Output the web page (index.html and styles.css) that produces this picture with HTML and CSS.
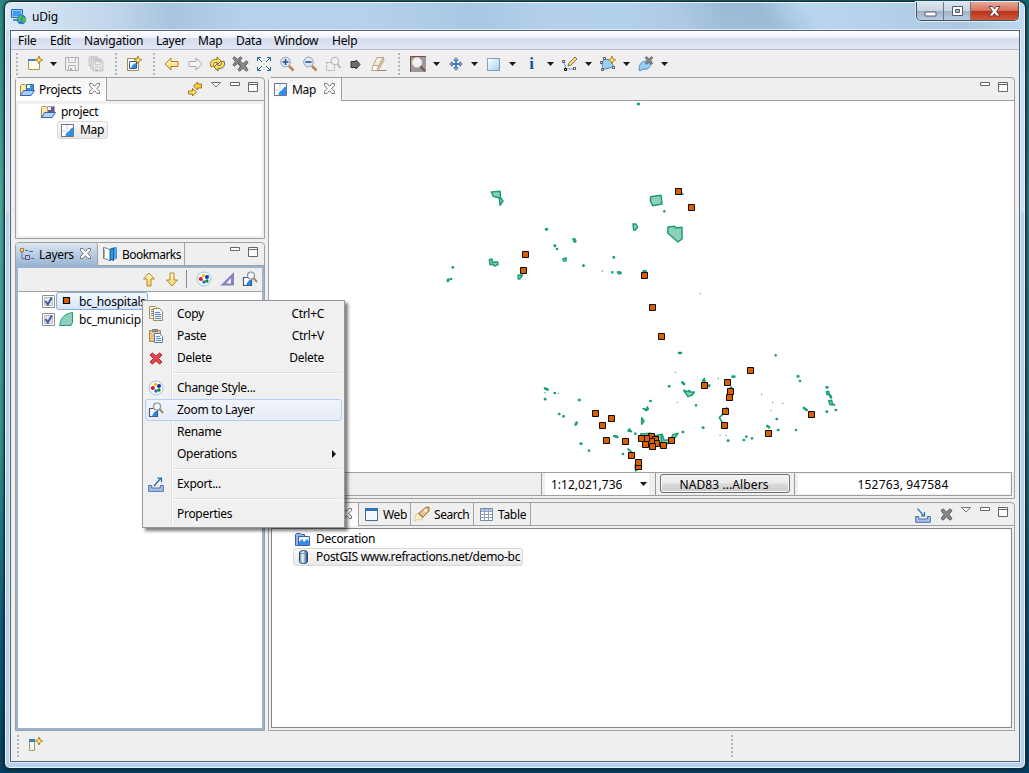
FILE: index.html
```html
<!DOCTYPE html>
<html lang="en">
<head>
<meta charset="utf-8">
<title>uDig</title>
<link rel="stylesheet" href="styles.css">
</head>
<body>
<svg class="defs" width="0" height="0">
  <defs>
    <linearGradient id="gold" x1="0" y1="0" x2="0" y2="1"><stop offset="0" stop-color="#fffbe0"/><stop offset="1" stop-color="#f3cf63"/></linearGradient>
    <linearGradient id="sky" x1="0" y1="0" x2="1" y2="1"><stop offset="0" stop-color="#fff"/><stop offset="1" stop-color="#9fd0f4"/></linearGradient>
    <linearGradient id="can" x1="0" y1="0" x2="1" y2="0"><stop offset="0" stop-color="#4b8fae"/><stop offset=".4" stop-color="#f4ffff"/><stop offset="1" stop-color="#1c3f74"/></linearGradient>
    <symbol id="spark" viewBox="0 0 7 7"><path d="M3.5 0l1 2.500 2.500 1-2.500 1-1 2.500-1-2.500-2.500-1 2.500-1z" fill="#fff3a8" stroke="#b38612" stroke-width=".9"/></symbol>
    <symbol id="folder" viewBox="0 0 16 16"><path d="M1.500 13.500v-10l1-1h3l1 1h3v9z" fill="#fdeaa5" stroke="#a98a45"/><path d="M7.500 2.500h7v7h-7z" fill="#2d92e8" stroke="#4266a2"/><path d="M8 3h3v3h-3z" fill="#fff"/><path d="M1.500 13.500l3-5h11l-3.500 5z" fill="#a9cdf7" stroke="#3a62b0"/></symbol>
    <symbol id="folder-open" viewBox="0 0 16 16"><path d="M1.500 13.500v-10l1-1h3l1 1h3v9z" fill="#fdeaa5" stroke="#a98a45"/><path d="M7.500 2.500h7v7h-7z" fill="#66588f" stroke="#a89bbd"/><path d="M8 3h3v3h-3z" fill="#eee"/><path d="M1.500 13.500l3-5h11l-3.500 5z" fill="#b5d5f7" stroke="#3a62b0"/></symbol>
    <symbol id="map" viewBox="0 0 14 14"><path d="M.5.5h13v13h-13z" fill="#fdfdff" stroke="#5d6478"/><path d="M13 4c-3 0-3 3-5 4-2 1-3 2-3 5h8z" fill="#2e91e9"/><path d="M6.500 1v5M1 7.500h5" stroke="#c5c9e3"/></symbol>
    <symbol id="close" viewBox="0 0 11 11"><path d="M.5.5h2.500l2.500 2.800L8 .5h2.500v2L7.800 5.500l2.700 3v2H8L5.500 7.700 3 10.500H.5v-2l2.700-3-2.700-3z" fill="#fff" stroke="#666" stroke-width=".9"/></symbol>
    <symbol id="min" viewBox="0 0 11 4"><path d="M.5.5h9v3h-9z" fill="#fff" stroke="#666"/></symbol>
    <symbol id="max" viewBox="0 0 11 11"><path d="M.5.5h9v9h-9zM.5 2.500h9" fill="#fff" stroke="#666"/></symbol>
    <symbol id="tri" viewBox="0 0 11 6"><path d="M.5.5h9L5 5z" fill="#fff" stroke="#777"/></symbol>
    <symbol id="drop" viewBox="0 0 7 4"><path d="M0 0h7L3.500 4z" fill="#1a1a1a"/></symbol>
    <symbol id="greyx" viewBox="0 0 13 13"><path d="M1 2.500L3 .8l3.500 3.200L10 .8l2 1.700-3 4 3 4-2 1.700L6.500 9 3 12.200l-2-1.700 3-4z" fill="#888" stroke="#5c5c5c"/></symbol>
    <symbol id="palette" viewBox="0 0 16 16"><circle cx="8" cy="8" r="7" fill="#eef8ff" stroke="#9fc3df"/><circle cx="8" cy="8" r="5.600" fill="#fff"/><circle cx="7.500" cy="4.500" r="1.700" fill="#f2c400"/><circle cx="11" cy="6" r="2" fill="#1231b5"/><circle cx="4.800" cy="8" r="2" fill="#e01515"/><circle cx="8" cy="11" r="1.800" fill="#1f74e0"/><circle cx="11" cy="10" r="1.700" fill="#108a28"/></symbol>
    <symbol id="zoomlayer" viewBox="0 0 16 16"><path d="M1.500 6.500h8v8h-8z" fill="#fff" stroke="#4b5880" stroke-width="1.200"/><path d="M9 9c-3 0-3 2-5 5h5z" fill="#2586e8"/><circle cx="9" cy="4.500" r="3.500" fill="#f3f6fa" stroke="#8794a3" stroke-width="1.200"/><path d="M11.500 7l3.500 4" stroke="#a38a5d" stroke-width="2"/></symbol>
    <symbol id="sync" viewBox="0 0 16 16"><path d="M6.500 5l4-4v2h4v4h-4v2z" fill="#f9cf49" stroke="#a87410"/><path d="M9.500 11l-4 4v-2h-4v-3h4V7.500z" fill="#ffe27a" stroke="#a87410"/></symbol>
    <symbol id="hosp" viewBox="0 0 8 8"><path d="M1.500 1.500h6v6h-6z" fill="#d95f02" stroke="#100800"/></symbol>
    <symbol id="arrow" viewBox="0 0 16 14"><path d="M1 7l6-6v3.500h7v5H7V13z" stroke-linejoin="round"/></symbol>
    <symbol id="lens" viewBox="0 0 16 16"><path d="M10 10l4.500 4.500" stroke="#b9854b" stroke-width="2.500"/><circle cx="6.500" cy="6" r="4.800" fill="#dfeaf7" stroke="#8fa0b5"/></symbol>
    <symbol id="disk" viewBox="0 0 16 16"><path d="M1.500 1.500h13v13h-13z" fill="#efefef" stroke="#b0b0b0"/><path d="M4.500 1.500h7v5h-7zM4.500 14.500v-5h7v5" fill="none" stroke="#b8b8b8"/><path d="M6 12h2v3H6z" fill="#b0b0b0"/></symbol>
    <symbol id="tray" viewBox="0 0 16 15"><path d="M.7 8.500h3v2.500h8.600V8.500h3v5.800H.7z" fill="#a9c3e8" stroke="#4a6ca8"/></symbol>
  </defs>
</svg>

<div class="window">
  <header class="titlebar">
    <svg class="app-icon" viewBox="0 0 16 16"><path d="M.5 .5h11v8H.5z" fill="#8fc6f5" stroke="#2c6aab"/><path d="M2 2h8v5H2z" fill="#3c9bea"/><path d="M2 10h5v2H2z" fill="#5590c8"/><circle cx="10.500" cy="10.500" r="4.800" fill="#3079cf"/><path d="M6.500 9l3-3 2 2-2 2 1 2-2 1zM12 8l3 1v3l-2 2-2-2z" fill="#4ec04b"/></svg>
    <span class="title">uDig</span>
    <div class="caption">
      <span class="cap cap-min"><svg width="13" height="6"><path d="M1 1h11v4H1z" fill="#fff" stroke="#555a69"/></svg></span>
      <span class="cap cap-max"><svg width="13" height="11"><path d="M1.500 .5h10v9h-10z" fill="#fff" stroke="#555a69"/><path d="M4.500 3.500h4v3h-4z" fill="#a9bccf" stroke="#555a69"/></svg></span>
      <span class="cap cap-close"><svg width="13" height="11"><path d="M1 .5h3.500l2 2.500 2-2.500H12L8.500 5.500l3.500 4.500H8.500l-2-2.500-2 2.500H1l3.500-4.500z" fill="#fff" stroke="#5d4048"/></svg></span>
    </div>
  </header>

  <div class="client">
    <nav class="menubar"><span>File</span><span>Edit</span><span>Navigation</span><span>Layer</span><span>Map</span><span>Data</span><span>Window</span><span>Help</span></nav>

    <div class="toolbar">
      <i class="grip g1"></i>
      <span class="tb w24"><svg width="16" height="16"><path d="M1.500 3.500h11v10h-11z" fill="#fffdf0" stroke="#b39352"/><path d="M1 3h9v2H1z" fill="#3d86cc"/><use href="#spark" x="8" y="0" width="8" height="8"/></svg></span>
      <span class="tb w13"><svg width="7" height="4"><use href="#drop"/></svg></span>
      <span class="tb w24"><svg width="16" height="16"><use href="#disk"/></svg></span>
      <span class="tb saveall"><svg width="16" height="16"><use href="#disk" width="11" height="11"/><use href="#disk" x="2" y="2" width="12" height="12"/><use href="#disk" x="4" y="4" width="12" height="12"/></svg></span>
      <i class="grip g2"></i>
      <span class="tb w29"><svg width="16" height="16"><path d="M1.500 2.500h11v12h-11z" fill="#fff" stroke="#a58b54"/><path d="M3.500 5.500h7v7h-7z" fill="#fff" stroke="#34588f"/><path d="M10 7c-3 1-4 2-5 5h5z" fill="#2e91e9"/><use href="#spark" x="8" y="0" width="8" height="8"/></svg></span>
      <i class="grip g3"></i>
      <span class="tb"><svg width="16" height="14" fill="url(#gold)" stroke="#b8821b"><use href="#arrow"/></svg></span>
      <span class="tb"><svg width="16" height="14" fill="#f4f4f4" stroke="#a9a9a9"><g transform="matrix(-1 0 0 1 16 0)"><use href="#arrow" width="16" height="14"/></g></svg></span>
      <span class="tb"><svg width="17" height="16"><path d="M2 11C0 6 3 3 8 3.500V1l4 4-4 4V6.500C5 6 4 8 5 10z" fill="#f7dc55" stroke="#8b6c18" stroke-width=".9"/><path d="M15 5c2 5-1 8-6 7.500V15l-4-4 4-4v2.500c3 .5 4-1.500 3-3.500z" fill="#f7dc55" stroke="#6a5b2a" stroke-width=".9"/></svg></span>
      <span class="tb"><svg width="17" height="16"><use href="#greyx" x="0" y="0" width="11" height="11"/><use href="#greyx" x="5" y="4" width="12" height="12"/></svg></span>
      <span class="tb"><svg width="16" height="16" fill="none" stroke="#1b67a5"><path d="M1.500 5V1.500H5M11 1.500h3.500V5M1.500 11v3.500H5M11 14.500h3.500V11M2 2l4 4M14 2l-4 4M2 14l4-4M14 14l-4-4"/></svg></span>
      <span class="tb"><svg width="16" height="16"><use href="#lens"/><path d="M3.500 6h6M6.500 3v6" stroke="#1e4f94" stroke-width="1.600"/></svg></span>
      <span class="tb"><svg width="16" height="16"><use href="#lens"/><path d="M3.500 6h6" stroke="#1e4f94" stroke-width="1.600"/></svg></span>
      <span class="tb"><svg width="16" height="16"><path d="M1.500 6.500h8v8h-8z" fill="none" stroke="#aaa" stroke-dasharray="2 1"/><circle cx="10" cy="5" r="3.800" fill="#f1f1f1" stroke="#b2b2b2"/><path d="M12.500 8l3 4" stroke="#b2b2b2" stroke-width="1.600"/></svg></span>
      <span class="tb"><svg width="11" height="11"><path d="M1 2.500h5V1L10 5.500 6 10V8.500H1z" fill="#6b7078" stroke="#2f3238"/></svg></span>
      <span class="tb"><svg width="16" height="16"><path d="M6 1.500h6.500l-4.500 8H2z" fill="#f6ecda" stroke="#b5a487"/><path d="M2 9.500h6l-2 5H.7z" fill="#fff" stroke="#b5a487"/><path d="M12.500 1.500L8 9.500l-2 5 3-3 4-7z" fill="#d8c6a5" stroke="#b5a487" stroke-width=".7"/><path d="M6 14.500h9.500" stroke="#a5895c"/></svg></span>
      <i class="grip g4"></i>
      <span class="tb tool"><svg width="16" height="16"><path d="M0 0h16v16H0z" fill="#9a9a9a"/><path d="M.5 16V.5H16" fill="none" stroke="#814d42"/><path d="M10 10l5 5" stroke="#7d5149" stroke-width="2"/><circle cx="7" cy="6.500" r="4.800" fill="#f1f1f1" stroke="#ddd"/></svg></span>
      <span class="tb dd"><svg width="7" height="4"><use href="#drop"/></svg></span>
      <span class="tb tool"><svg width="14" height="14" fill="none" stroke="#2967aa"><path d="M7 2v10M2 7h10" stroke-width="1.600"/><path d="M4.800 3.200L7 .8l2.200 2.400zM4.800 10.800L7 13.200l2.200-2.400zM3.200 4.800L.8 7l2.400 2.200zM10.800 4.800L13.200 7l-2.400 2.200z" fill="#dcebfb"/></svg></span>
      <span class="tb dd"><svg width="7" height="4"><use href="#drop"/></svg></span>
      <span class="tb tool"><svg width="13" height="13"><path d="M.5.5h12v12H.5z" fill="url(#sky)" stroke="#244f7c" stroke-dasharray="1 1"/></svg></span>
      <span class="tb dd"><svg width="7" height="4"><use href="#drop"/></svg></span>
      <span class="tb tool info">i</span>
      <span class="tb dd"><svg width="7" height="4"><use href="#drop"/></svg></span>
      <span class="tb tool"><svg width="16" height="16"><path d="M2 6l2 7h9" fill="none" stroke="#4a9bdd"/><path d="M.5 4.500h2v2h-2zM11.500 11.500h2v2h-2z" fill="#fff" stroke="#555"/><path d="M2.500 12.500h2v2h-2z" fill="#fe0" stroke="#000"/><path d="M6 10l1-3 6-6 2 2-6 6z" fill="#f2d79a" stroke="#91703c"/></svg></span>
      <span class="tb dd"><svg width="7" height="4"><use href="#drop"/></svg></span>
      <span class="tb tool"><svg width="16" height="16"><path d="M4 3l7 1 2.500 7L3 13.500 2 8z" fill="#9ccdf2" stroke="#4d95cf"/><path d="M3.500 1.500h2v2h-2zM.5 5.500h2v2h-2zM12.500 10.500h2v2h-2zM1.500 12.500h2v2h-2z" fill="#fff" stroke="#555"/><use href="#spark" x="8" y="0" width="8" height="8"/></svg></span>
      <span class="tb dd"><svg width="7" height="4"><use href="#drop"/></svg></span>
      <span class="tb tool"><svg width="16" height="16"><path d="M1 14c0-6 3-9 7-9l5 3c-1 4-4 6-8 5l-3 2z" fill="#9ccdf2" stroke="#4294d6"/><use href="#greyx" x="6" y="0" width="10" height="9"/></svg></span>
      <span class="tb dd"><svg width="7" height="4"><use href="#drop"/></svg></span>
    </div>

    <main class="workbench">
      <div class="col-left">
        <section class="pane projects">
          <div class="tabs">
            <div class="tab sel t-projects"><svg width="16" height="16"><use href="#folder"/></svg><span>Projects</span><svg class="x" width="11" height="11"><use href="#close"/></svg></div>
            <div class="acts"><svg width="16" height="16"><use href="#sync"/></svg><svg class="a-tri" width="11" height="6"><use href="#tri"/></svg><svg class="a-min" width="11" height="4"><use href="#min"/></svg><svg class="a-max" width="11" height="11"><use href="#max"/></svg></div>
          </div>
          <div class="inner">
            <div class="row r-project"><svg width="16" height="16"><use href="#folder-open"/></svg><span>project</span></div>
            <div class="row r-map"><svg width="13" height="13"><use href="#map"/></svg><span>Map</span></div>
          </div>
        </section>

        <section class="pane layers">
          <div class="tabs">
            <div class="tab active t-layers"><svg width="16" height="16"><path d="M3 5v6.500h3M6 3.500h3" fill="none" stroke="#55779c"/><path d="M1.500 1.500h3v3h-3z" fill="#ffd68a" stroke="#b27a1e"/><path d="M6.500 8.500h4v4h-4z" fill="#c9c0de" stroke="#5a4e82"/><path d="M10 4.500h4M12 11.500h3" stroke="#2b76ac"/></svg><span>Layers</span><svg class="x" width="11" height="11"><use href="#close"/></svg></div>
            <div class="tab t-book"><svg width="16" height="16"><path d="M1.500 1.500l4 1 2 1 2-1 5-1v11l-5 1-2 1-2-1-4-1z" fill="#fff" stroke="#5a82a3"/><path d="M2.500 3.500v8" stroke="#c9a650"/><path d="M8 3.500l3.500-1.500v13L10 13l-2 2z" fill="#3394df" stroke="#145c9b"/><path d="M12 1h2.500v11H12z" fill="#4ca5e8"/></svg><span>Bookmarks</span></div>
            <div class="acts"><svg class="a-min" width="11" height="4"><use href="#min"/></svg><svg class="a-max" width="11" height="11"><use href="#max"/></svg></div>
          </div>
          <div class="layer-box">
            <div class="layer-tools">
              <svg class="up" width="14" height="15"><path d="M7 1l5.500 6H9v7H5V7H1.500z" fill="url(#gold)" stroke="#b8851f"/></svg>
              <svg width="14" height="15"><path d="M7 14L1.500 8H5V1h4v7h3.500z" fill="url(#gold)" stroke="#b8851f"/></svg>
              <i></i>
              <svg width="16" height="16"><use href="#palette"/></svg>
              <svg width="16" height="16"><path d="M1 15L15 1v14z" fill="#8583be"/><path d="M7 12.500l5-5.500v5.500z" fill="#f5f5fb"/><path d="M1 14.500h14" stroke="#b9b6da"/></svg>
              <svg width="16" height="16"><use href="#zoomlayer"/></svg>
            </div>
            <div class="layer-tree">
              <div class="layer"><svg class="check" width="13" height="13"><path d="M.5.5h12v12H.5z" fill="#fff" stroke="#8e8f8f"/><path d="M2.500 2.500h8v8h-8z" fill="#e3e5e8" stroke="#b5bcc4"/><path d="M3.500 6l2.300 3.500L9.800 2.500" fill="none" stroke="#3f579b" stroke-width="1.900"/></svg><span class="lname hot"><svg width="16" height="16"><path d="M4.500 4.500h6v6h-6z" fill="#d95f02" stroke="#000" stroke-width="1.200"/></svg>bc_hospitals</span></div>
              <div class="layer"><svg class="check" width="13" height="13"><path d="M.5.5h12v12H.5z" fill="#fff" stroke="#8e8f8f"/><path d="M2.500 2.500h8v8h-8z" fill="#e3e5e8" stroke="#b5bcc4"/><path d="M3.500 6l2.300 3.500L9.800 2.500" fill="none" stroke="#3f579b" stroke-width="1.900"/></svg><span class="lname"><svg width="16" height="16"><path d="M.5 14.500C2 7 5 3 13.500 1.500v10l-1.500 3z" fill="#8ecfba" stroke="#1b9e77"/></svg>bc_municip</span></div>
            </div>
          </div>
        </section>
      </div>

      <div class="col-right">
        <section class="pane mappane">
          <div class="tabs">
            <div class="tab sel t-map"><svg width="13" height="13"><use href="#map"/></svg><span>Map</span><svg class="x" width="11" height="11"><use href="#close"/></svg></div>
            <div class="acts"><svg class="a-min" width="11" height="4"><use href="#min"/></svg><svg class="a-max" width="11" height="11"><use href="#max"/></svg></div>
          </div>
          <svg class="canvas" viewBox="269 101 745 371">
            <g transform="translate(430 95) scale(.33333)" fill="#8ecfba" stroke="#1b9e77" stroke-width="4.500" stroke-linejoin="round" stroke-linecap="round">
              <path d="M184 291l26-2 2 20 7 9-9 13-2-22-18-5zM662 305l31-4 3 26-28 5-7-15zM714 396l20-2 3 5 19-2 0 35-12 9-31-27zM609 387h9l5 9-7 9h-5zM178 494l8-2 2 10 15-1 1 8-10 4-6-5-8 1zM264 541l14-1-9 12h-4zM429 431l6 1 3 8-5 2zM399 491l10-2-1 8-8 1zM562 531l8-1 4 4-7 3z"/>
              <path d="M624 27h3M348 403h3M374 451l1 2M381 462h0M68 517h1M54 558l1-4M63 552h0M460 512h1M551 487h1M547 532h0M703 349h0M756 297h1M641 529h6" stroke-width="8"/>
              <path d="M517 528h0M811 595h0" stroke-width="4"/>
            </g>
            <g transform="translate(530 330) scale(.33333)" fill="#8ecfba" stroke="#1b9e77" stroke-width="4.500" stroke-linejoin="round" stroke-linecap="round">
              <path d="M461 181l14 4 2-4 7 6 9-1-6 9-13 5zM339 236l10 2 3-8 3 8-6 4zM335 263l7 10-7 10zM294 303l4-6 7 8zM889 185l7-1 2 8-7 2zM896 212l9-1 2 10 7 4-14-1zM517 153l6-8 2 9zM533 166l7-1-2 5zM332 312l30-2 8 8 27-5 5 18 20-2 6-14 16-5-14 20-24 15-24-10-35 6-10-12zM378 320l7 18M394 318l1 18M315 405l20 4-18 14z"/>
              <path d="M590 233l-6 14-16 16 11 18M294 357l16 14" fill="none" stroke-width="5"/>
              <path d="M447 69h6M45 175l8 4M45 207l1 1M74 189h1M147 210h2M87 252h1M100 259h1M137 284l3-6M253 318l9 3M316 311h0M152 341h2M177 362h0M279 372h0M361 213h1M457 157l5 5M417 169h1M498 226h0M608 140h5M603 173l2 4M737 76h0M803 139h2M810 153h0M890 172h2M900 196l3 6M822 234l8 6M890 245h1M917 240h1M740 267h1M712 288l5 4M744 300h1M798 300h0M594 332h1M641 330h1M649 320h0M666 325h0M519 293h1M458 306h1" stroke-width="8"/>
              <path d="M45 188h0M85 190h0M436 127h0M442 217h0M565 146h0M570 316h0M588 316h0M695 193h0M728 217h0M759 220h0M723 241h0" stroke-width="4"/>
            </g>
            <g class="hospitals">
              <use href="#hosp" x="674" y="187" width="8" height="8"/><use href="#hosp" x="687" y="203" width="8" height="8"/><use href="#hosp" x="521" y="250" width="8" height="8"/><use href="#hosp" x="519" y="266" width="8" height="8"/><use href="#hosp" x="640" y="271" width="8" height="8"/><use href="#hosp" x="648" y="303" width="8" height="8"/><use href="#hosp" x="657" y="332" width="8" height="8"/><use href="#hosp" x="746" y="366" width="8" height="8"/><use href="#hosp" x="723" y="378" width="8" height="8"/><use href="#hosp" x="700" y="381" width="8" height="8"/><use href="#hosp" x="726" y="387" width="8" height="8"/><use href="#hosp" x="725" y="393" width="8" height="8"/><use href="#hosp" x="721" y="407" width="8" height="8"/><use href="#hosp" x="720" y="421" width="8" height="8"/><use href="#hosp" x="807" y="410" width="8" height="8"/><use href="#hosp" x="764" y="429" width="8" height="8"/><use href="#hosp" x="591" y="409" width="8" height="8"/><use href="#hosp" x="607" y="414" width="8" height="8"/><use href="#hosp" x="598" y="421" width="8" height="8"/><use href="#hosp" x="602" y="436" width="8" height="8"/><use href="#hosp" x="621" y="437" width="8" height="8"/><use href="#hosp" x="667" y="436" width="8" height="8"/><use href="#hosp" x="641" y="440" width="8" height="8"/><use href="#hosp" x="647" y="432" width="8" height="8"/><use href="#hosp" x="651" y="435" width="8" height="8"/><use href="#hosp" x="652" y="439" width="8" height="8"/><use href="#hosp" x="659" y="441" width="8" height="8"/><use href="#hosp" x="647" y="437" width="8" height="8"/><use href="#hosp" x="648" y="442" width="8" height="8"/><use href="#hosp" x="642" y="434" width="8" height="8"/><use href="#hosp" x="637" y="434" width="8" height="8"/><use href="#hosp" x="627" y="451" width="8" height="8"/><use href="#hosp" x="634" y="462" width="8" height="8"/><use href="#hosp" x="634" y="458" width="8" height="8"/>
            </g>
          </svg>
          <div class="status">
            <div class="scale"><span>1:12,021,736</span><svg width="7" height="4"><use href="#drop"/></svg></div>
            <div class="crs"><button class="crs-btn">NAD83 ...Albers</button></div>
            <div class="coords">152763, 947584</div>
          </div>
        </section>

        <section class="pane catalog">
          <div class="tabs">
            <div class="tab sel t-cat"><svg class="x" width="11" height="11"><use href="#close"/></svg></div>
            <div class="tab t-web"><svg width="13" height="13"><path d="M.5.5h12v12H.5z" fill="#f1f8ff" stroke="#466b96"/><path d="M0 0h13v3H0z" fill="#2f74b9"/></svg><span>Web</span></div>
            <div class="tab t-search"><svg width="16" height="16"><path d="M.5 15l1.500-7 3-1 4 4-1 3-3-1z" fill="#fff3b5" stroke="#d9c27a" stroke-width=".7"/><path d="M4.500 7.500l7-6 3.500-.5v4L8.500 11.500z" fill="#edc48c" stroke="#9a6a3a"/><path d="M5 7.500l3.500 3.500" stroke="#8c8cae" stroke-width="1.500"/><circle cx="11.500" cy="4.500" r="1.200" fill="#fff"/></svg><span>Search</span></div>
            <div class="tab t-table"><svg width="13" height="13"><path d="M.5.5h12v12H.5z" fill="#fff" stroke="#7589a6"/><path d="M1 1h11v2H1z" fill="#b7c9e2"/><path d="M1 3.500h11M1 6.500h11M1 9.500h11M4.500 1v11M8.500 1v11" stroke="#8fa3c0"/></svg><span>Table</span></div>
            <div class="acts"><svg class="a-import" width="16" height="15"><use href="#tray"/><path d="M2.500 .5l6 7M9.500 4v4H6" fill="none" stroke="#2575ad" stroke-width="1.200"/></svg><svg class="a-del" width="13" height="13"><use href="#greyx"/></svg><svg class="a-tri" width="11" height="6"><use href="#tri"/></svg><svg class="a-min" width="11" height="4"><use href="#min"/></svg><svg class="a-max" width="11" height="11"><use href="#max"/></svg></div>
          </div>
          <div class="inner-line">
            <div class="row r-deco"><svg width="15" height="15"><path d="M.5 2.500l1-1h4l1 1h3v11h-9z" fill="#8fb6ea" stroke="#3a5fae"/><path d="M3.500 4.500h11v9h-11z" fill="#eef6ff" stroke="#3a5fae"/><path d="M4 10l3-3 2 3 3-3 2 2v4H4z" fill="#3b8be6"/></svg><span>Decoration</span></div>
            <div class="row r-post"><svg width="11" height="14"><path d="M1.500 2.500c0-2.500 8-2.500 8 0v9c0 2.500-8 2.500-8 0z" fill="url(#can)" stroke="#26425a"/><path d="M2 2.500c1 1.500 6 1.500 7 0" fill="none" stroke="#5e97a8"/></svg><span>PostGIS www.refractions.net/demo-bc</span></div>
          </div>
        </section>
      </div>
    </main>

    <footer class="trim"><i class="grip"></i><svg width="15" height="15"><path d="M1.500 3.500h5v10h-5z" fill="#eef8fb" stroke="#aa9a68"/><path d="M1 2h6v3H1z" fill="#3e80bd"/><use href="#spark" x="7" y="0" width="8" height="8"/></svg><i class="grip grip2"></i></footer>
  </div>
</div>

<div class="ctx">
  <div class="mi"><svg width="16" height="16"><path d="M1.500.5h6l2 2v10h-8z" fill="#fff8e0" stroke="#b39350"/><path d="M5.500 2.500h6l3 3v9h-9z" fill="#f2f7ff" stroke="#a08a55"/><path d="M3 3.500h2M3 5.500h2M3 7.500h2M3 9.500h2M7 6.500h5M7 8.500h6M7 10.500h6M7 12.500h6" stroke="#5a80bd"/></svg><span>Copy</span><b>Ctrl+C</b></div>
  <div class="mi"><svg width="16" height="16"><path d="M1.500 2.500h11v11h-11z" fill="#e5c48c" stroke="#b08a50"/><path d="M4.500 1.500h5v2h-5z" fill="#9aa4b6" stroke="#778"/><path d="M6.500 5.500h5l3 3v6h-8z" fill="#f5f9ff" stroke="#5c7fb3"/><path d="M8 8.500h4M8 10.500h5M8 12.500h5" stroke="#6a92c8"/></svg><span>Paste</span><b>Ctrl+V</b></div>
  <div class="mi"><svg width="14" height="13"><path d="M1 3L3.500 1 7 4.200 10.500 1 13 3 9.500 6.500 13 10l-2.500 2L7 8.800 3.500 12 1 10l3.500-3.500z" fill="#e74646" stroke="#b3202c"/></svg><span>Delete</span><b>Delete</b></div>
  <hr>
  <div class="mi"><svg width="16" height="16"><use href="#palette"/></svg><span>Change Style...</span></div>
  <div class="mi on"><svg width="16" height="16"><use href="#zoomlayer"/></svg><span>Zoom to Layer</span></div>
  <div class="mi"><i></i><span>Rename</span></div>
  <div class="mi"><i></i><span>Operations</span><svg class="sub" width="4" height="8"><path d="M0 0l4 4-4 4z" fill="#111"/></svg></div>
  <hr>
  <div class="mi"><svg width="16" height="15"><use href="#tray"/><path d="M6 9l7-8M9 1h4.500v4" fill="none" stroke="#256a9d" stroke-width="1.200"/></svg><span>Export...</span></div>
  <hr>
  <div class="mi"><i></i><span>Properties</span></div>
</div>
</body>
</html>
```
FILE: styles.css
```css
* { box-sizing: border-box; }
body {
  margin: 0;
  width: 1029px;
  height: 773px;
  overflow: hidden;
  padding: 1px 3px 4px 4px;
  font: 12px/18px "Noto Sans", "Open Sans", sans-serif;
  letter-spacing: -0.2px;
  color: #000;
  background: linear-gradient(90deg, rgba(0, 40, 70, 0) 60%, rgba(0, 60, 100, .45)), linear-gradient(180deg, #288680 0, #4ba59b 25%, #35938f 55%, #0d5d7d 80%, #053e5c 100%);
}
svg { display: block; flex: none; }
.defs { position: absolute; }
i { display: block; flex: none; }

.window {
  height: 768px;
  display: flex;
  flex-direction: column;
  border: 1px solid #20292f;
  border-radius: 7px 7px 6px 6px;
  padding: 0 5px 6px;
  box-shadow: inset 0 0 0 1px #e8f4fc, 0 0 3px #012;
  background: linear-gradient(180deg, #c4dcf0 0, #cbdff1 210px, #b7d2ee 211px, #b4d2ee 100%);
}
.titlebar {
  height: 27px;
  flex: none;
  margin: 1px -4px 0;
  display: flex;
  align-items: center;
  padding-left: 5px;
  border-radius: 5px 5px 0 0;
  background:
    linear-gradient(68deg, transparent 340px, rgba(150, 190, 225, .0) 0, rgba(140, 175, 210, .28) 440px, transparent 510px),
    linear-gradient(55deg, transparent 560px, rgba(130, 165, 195, .5) 630px, transparent 670px),
    linear-gradient(90deg, #dbe9f5 0, #bfd5ea 110px, #a9c4df 165px, #b6d1eb 240px, #b3d0ec 620px, #a8c4df 720px, #bad6ef 780px, #b7d3ec 860px, #abc8e0 960px, #c0daf0 100%);
}
.app-icon { width: 16px; height: 16px; }
.title { margin-left: 5px; letter-spacing: -0.2px; }
.caption {
  align-self: flex-start;
  height: 19px;
  display: flex;
  margin: -1px 5px 0 auto;
  border: 1px solid #48505c;
  border-top: 0;
  border-radius: 0 0 5px 5px;
  overflow: hidden;
  box-shadow: 0 0 0 1px #dcebf7;
}
.cap { display: flex; align-items: center; justify-content: center; background: linear-gradient(#dce7f1 0, #c6d3e0 50%, #9fb2c6 51%, #b9cde0 100%); border-right: 1px solid #6b7886; }
.cap-min { width: 27px; padding-top: 5px; }
.cap-max { width: 27px; }
.cap-close { width: 47px; border: 0; background: linear-gradient(#e9a898 0, #d6705a 48%, #b93418 52%, #cf5a38 100%); }

.client { flex: 1; min-height: 0; display: flex; flex-direction: column; border: 1px solid #58636f; background: #efefef; box-shadow: 0 0 0 1px #dcebf8; }
.menubar {
  height: 19px;
  flex: none;
  display: grid;
  grid-template-columns: 32px 34px 72px 42px 38px 38px 58px auto;
  padding-left: 7px;
  line-height: 20px;
  background: linear-gradient(#fff 0, #eef1f9 38%, #d5dcee 42%, #e2e7f5 100%);
  border-bottom: 1px solid #b6bccc;
}
.toolbar { height: 27px; flex: none; display: flex; align-items: center; padding-top: 1px; margin-left: -1px; }
.tb { width: 23px; display: flex; justify-content: center; flex: none; }
.w24 { width: 24px; }
.w13 { width: 13px; }
.w29 { width: 29px; }
.saveall { margin-right: 5px; }
.tool { width: 21px; }
.dd { width: 17px; padding-right: 1px; }
.info { font: bold 17px/20px "Liberation Serif", serif; color: #1455a0; }
.grip { height: 22px; background: repeating-linear-gradient(180deg, #b4b4b4 0 2px, transparent 2px 4px) center / 2px 100% no-repeat; }
.g1 { width: 13px; }
.g2 { width: 7px; }
.g3 { width: 12px; }
.g4 { width: 17px; }

.workbench { flex: 1; min-height: 0; display: flex; gap: 3px; padding: 0 4px; }
.col-left { width: 250px; display: flex; flex-direction: column; gap: 3px; }
.col-right { width: 747px; display: flex; flex-direction: column; gap: 3px; }
.pane { display: flex; flex-direction: column; border: 1px solid #a0a0a0; border-radius: 4px 4px 0 0; }
.projects { height: 162px; }
.layers { flex: 1; min-height: 0; }
.mappane { height: 422px; background: #efefef; }
.catalog { flex: 1; min-height: 0; }

.tabs { height: 23px; flex: none; display: flex; box-shadow: inset 0 -1px #a0a0a0; letter-spacing: -0.3px; }
.tab { height: 22px; display: flex; align-items: center; padding: 1px 4px 0 3px; border-right: 1px solid #a0a0a0; white-space: nowrap; }
.tab svg { margin-top: -1px; }
.tab span { margin-left: 4px; line-height: 20px; }
.tab .x { margin-left: auto; margin-top: -3px; }
.sel { height: 23px; background: linear-gradient(#f4f4f4, #fff); }
.active { height: 23px; background: linear-gradient(#dbe6f1, #99b4d1); border-radius: 3px 3px 0 0; }
.t-projects { width: 91px; padding-right: 6px; }
.t-layers { width: 82px; padding-right: 6px; }
.t-book { width: 87px; padding-left: 4px; letter-spacing: -0.55px; }
.t-map { width: 73px; padding: 1px 6px 0 5px; }
.t-map span { margin-left: 5px; }
.t-cat { width: 90px; padding-right: 6px; }
.t-web { width: 52px; padding-left: 6px; }
.t-web span, .t-table span { margin-left: 5px; }
.t-search { width: 63px; letter-spacing: -0.45px; }
.t-table { width: 57px; padding-left: 6px; }
.acts { margin-left: auto; display: flex; align-items: flex-start; gap: 8px; padding: 3px 5px 0 0; }
.a-min { margin-top: 1px; }
.a-tri { margin-top: 1px; }
.a-max { margin: 1px 0 0 -1px; }
.a-import { margin: 2px 1px 0 0; }
.a-del { margin-top: 2px; }

.inner { flex: 1; background: #fff; margin: 3px 2px 2px; }
.row { height: 18px; display: flex; align-items: center; white-space: nowrap; letter-spacing: -0.3px; }
.r-project { padding-left: 22px; gap: 5px; margin-top: -1px; }
.r-map { margin-left: 39px; width: 51px; padding-left: 3px; gap: 6px; border: 1px solid #d9d9d9; border-radius: 3px; background: linear-gradient(#fafafa, #e8e8e8); }

.layer-box { flex: 1; min-height: 0; display: flex; flex-direction: column; padding: 2px; background: #99b4d1; }
.layer-tools { height: 24px; flex: none; display: flex; align-items: center; justify-content: flex-end; gap: 7px; padding: 0 4px 1px; background: #efefef; border-bottom: 1px solid #a0a0a0; }
.layer-tools i { width: 1px; height: 18px; margin-right: 2px; background: #8b8b8b; }
.layer-tools .up { margin-right: 2px; }
.layer-tree { flex: 1; background: #fff; }
.layer { height: 18px; display: flex; align-items: center; padding-left: 24px; gap: 1px; }
.lname { height: 18px; width: 92px; display: flex; align-items: center; gap: 4px; padding-left: 2px; border: 1px solid transparent; line-height: 17px; }
.hot { border-color: #84acdd; border-radius: 3px; background: linear-gradient(#f3f8fe, #d5e5fa); }

.canvas { width: 745px; height: 371px; background: #fff; }
.status { height: 24px; display: flex; margin: 0 2px 2px 2px; border: 1px solid #a0a0a0; border-left: 0; line-height: 25px; }
.scale { margin-left: 270px; width: 114px; display: flex; align-items: center; justify-content: space-between; padding: 0 8px 0 9px; border-left: 1px solid #999; background: linear-gradient(90deg, #efefef 3px, #fff 3px 107px, #efefef 107px); letter-spacing: 0; font-size: 12px; }
.crs { width: 140px; padding: 1px 5px 0 4px; border-left: 1px solid #999; border-right: 1px solid #999; }
.crs-btn { display: block; width: 130px; height: 19px; padding: 2px 2px 0 0; font: inherit; line-height: 16px; letter-spacing: 0.1px; border: 1px solid #6f6f6f; border-radius: 3px; background: linear-gradient(#f3f3f3 0, #ebebeb 48%, #dadada 52%, #cdcdcd 100%); box-shadow: inset 0 0 0 1px #f8f8f8; }
.coords { flex: 1; margin: 1px 1px 1px 3px; padding-right: 2px; background: #fff; text-align: center; letter-spacing: 0.15px; line-height: 22px; }

.inner-line { flex: 1; margin: 2px; border: 1px solid #85858d; background: #fff; padding-top: 1px; }
.r-deco { padding-left: 23px; gap: 6px; }
.r-post { margin-left: 21px; width: 230px; padding-left: 4px; gap: 7px; border: 1px solid #d9d9d9; border-radius: 3px; background: linear-gradient(#fafafa, #e8e8e8); }

.trim { height: 30px; flex: none; display: flex; padding: 4px 0 0 5px; }
.trim svg { margin: 2px 0 0 9px; }
.trim .grip { width: 3px; }
.trim .grip2 { margin-left: 687px; }

.ctx {
  position: absolute;
  left: 142px;
  top: 300px;
  width: 203px;
  height: 228px;
  padding: 2px;
  border: 1px solid #979797;
  letter-spacing: -0.3px;
  background: linear-gradient(90deg, transparent 28px, #e0e0e0 28px 29px, #fff 29px 30px, transparent 30px) 0 2px / 100% 222px no-repeat, #f0f0f0;
  box-shadow: 3px 3px 3px rgba(0, 0, 0, .5);
}
.mi { height: 22px; display: grid; grid-template-columns: 20px 1fr auto; column-gap: 11px; align-items: center; padding-right: 17px; border: 1px solid transparent; border-radius: 3px; }
.mi > :first-child { justify-self: center; }
.mi b { font-weight: 400; }
.mi .sub { margin-right: -8px; justify-self: end; position: relative; left: 4px; }
.on { border-color: #aecff7; background: linear-gradient(#f1f4f9, #e6edf7); }
.ctx hr { height: 2px; margin: 3px 0 3px 28px; border: 0; border-top: 1px solid #e0e0e0; border-bottom: 1px solid #fff; }
```
